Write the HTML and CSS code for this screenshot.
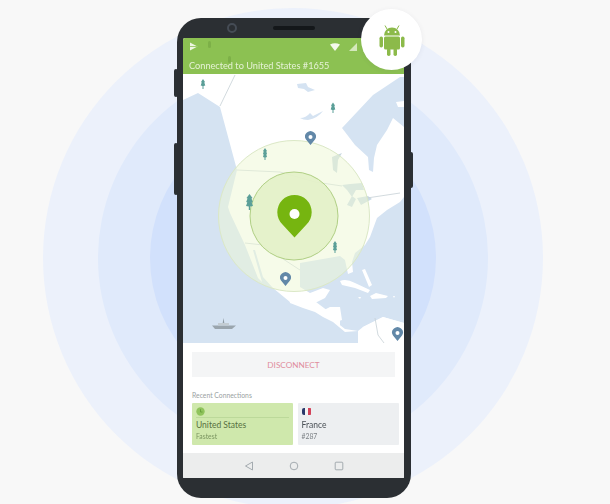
FILE: index.html
```html
<!DOCTYPE html>
<html lang="en">
<head>
<meta charset="utf-8">
<title>Android VPN</title>
<link rel="stylesheet" href="styles.css">
</head>
<body>
<div class="stage">
  <div class="ring ring-1"></div>
  <div class="ring ring-2"></div>
  <div class="ring ring-3"></div>

  <div class="side-btn btn-a"></div>
  <div class="side-btn btn-b"></div>
  <div class="side-btn btn-c"></div>

  <div class="phone">
    <div class="bezel-top">
      <span class="camera"></span>
      <span class="speaker"></span>
    </div>
    <div class="screen">
      <header class="app-bar">
        <span class="bar-tree bar-tree-a"></span>
        <span class="bar-tree bar-tree-b"></span>
        <div class="status">
          <svg class="st-play" width="9" height="9" viewBox="0 0 9 9"><path d="M1 .5 8.500 4.500 1 8.500Z" fill="#eef6e2"/><path d="M1 4.500h7" stroke="#8cc152" stroke-width=".8"/></svg>
          <svg class="st-wifi" width="10" height="8" viewBox="0 0 10 8"><path d="M0 1.500Q5-1 10 1.500L5 8Z" fill="#f4f9ec"/></svg>
          <svg class="st-signal" width="8" height="8" viewBox="0 0 8 8"><path d="M0 8 8 0V8Z" fill="#d4e8bc"/></svg>
        </div>
        <div class="title">Connected to United States #1655</div>
      </header>

      <div class="map">
        <svg class="map-svg" viewBox="183 74 221 269" width="221" height="269">
          <rect x="183" y="74" width="221" height="269" fill="#fff"/>
          <!-- Pacific and the coast of Mexico -->
          <path fill="#d5e3f2" d="M183 100 198 93 220 107 237 170 228 207 230 213 245 245 258 278 262 282 253 250 255 250 263 277 273 288 290 302 303 307 315 311 323 316 333 321 345 330 358 331V343H183Z"/>
          <!-- Gulf, Caribbean, Atlantic -->
          <path fill="#d5e3f2" d="M300 263 340 256 345 260 348 274 353 272 352 262 355 253 365 245 370 237 377 218 387 210 400 202 404 197V323L383 317 363 327 358 331V343H340V320L300 290Z"/>
          <!-- Hudson Bay -->
          <path fill="#d5e3f2" d="M342 128 373 95 400 77H404V127L393 118 387 130 377 145 374 158 373 172 369 170 368 157 355 145Z"/>
          <path fill="#fff" d="M396 102 404 101V107L398 107Z"/>
          <!-- Arctic islands -->
          <path fill="#d5e3f2" d="M297 84 306 83 308 87 315 90 308 92 304 89 298 88ZM300 118Q306 118 310 113L313 116 323 111Q318 118 308 120 303 120 300 118Z"/>
          <!-- Lakes -->
          <path fill="#c9d8e0" d="M332 157 342 153 338 160 337 173 333 170Z"/>
          <path fill="#cbdbe6" d="M342 185 350 184 362 183 364 190 356 190 352 197 347 190ZM347 205 352 196 356 199 352 207ZM357 198 368 196 372 199 361 205Z"/>
          <!-- Central America and islands -->
          <path fill="#fff" d="M288 291 300 287 310 293 323 288 330 290 325 298 315 303 320 312 330 307 340 307 342 320 336 322 345 329 358 331 345 332 333 322 323 317 315 312 303 308 290 303Z"/>
          <path fill="#fff" d="M340 281Q346 278 355 283L370 290 368 293 355 288 342 285ZM362 270 365 269 372 285 369 287ZM370 296 376 293 388 296 386 298 372 299ZM393 296 395 296 394 298ZM358 297 361 297 360 299Z"/>
          <!-- South America -->
          <path fill="#fff" d="M358 343 358 337 363 327 383 317 404 323V343Z"/>
          <path fill="none" stroke="#c6d0d6" stroke-width=".8" d="M235 75 220 106M237 170 280 172 315 182 342 186M245 243 263 245 280 257 300 270M367 198 400 193M375 318 378 335 384 343"/>
          <!-- Range circles -->
          <circle cx="294" cy="216" r="75.500" fill="#eef7d4" fill-opacity=".5" stroke="#dbe8c6" stroke-width="1"/>
          <circle cx="294" cy="216" r="44" fill="#e3f1c8" fill-opacity=".9" stroke="#b0cf84" stroke-width="1"/>
          <path fill="#76b510" d="M294.500 237.500 282.500 224.500A17.200 17.200 0 1 1 306.500 224.500Z"/>
          <circle cx="294.500" cy="214" r="5" fill="#fff"/>
          <!-- Server pins -->
          <g fill="#6288a8">
            <path d="M310.500 145 306 139.500A5.400 5.400 0 1 1 315 139.500Z"/>
            <path d="M285.500 286 281 280.500A5.400 5.400 0 1 1 290 280.500Z"/>
            <path d="M397.500 341 393 335.500A5.400 5.400 0 1 1 402 335.500Z"/>
          </g>
          <g fill="#fff"><circle cx="310.500" cy="137" r="2"/><circle cx="285.500" cy="278" r="2"/><circle cx="397.500" cy="333" r="2"/></g>
          <!-- Trees -->
          <g fill="#5b9f98">
            <path d="M203 79 205 82 204.300 82.500 205.300 85.500 203.500 86V89H202.500V86L200.700 85.500 201.700 82.500 201 82Z"/>
            <path d="M333 102.500 335 105.500 334.300 106 335.300 109.500 333.500 110V113H332.500V110L330.700 109.500 331.700 106 331 105.500Z"/>
            <path d="M265 148 267 151 266.300 151.500 267 154 266.300 154.500 267 157 265.500 157.500V160H264.500V157.500L263 157 263.700 154.500 263 154 263.700 151.500 263 151Z"/>
            <path d="M249.500 194 252.500 198 251.500 198.500 252.800 202 251.700 202.500 253 206 250.200 206.500V210H248.800V206.500L246 206 247.300 202.500 246.200 202 247.500 198.500 246.500 198Z"/>
            <path d="M335 241 337 244 336.300 244.500 337 247 336.300 247.500 337 250 335.500 250.500V253H334.500V250.500L333 250 333.700 247.500 333 247 333.700 244.500 333 244Z"/>
          </g>
          <!-- Ship -->
          <path fill="#9aa5ad" d="M212 325.500H236L232 329H215Z"/>
          <path fill="#c3ccd2" d="M218 323H229V325.500H218Z"/>
          <path fill="#8e9aa2" d="M223.500 318 224.300 323H222.700Z"/>
        </svg>
      </div>

      <div class="panel">
        <div class="disconnect">DISCONNECT</div>
        <div class="recent-label">Recent Connections</div>
        <div class="cards">
          <div class="card card-us">
            <div class="card-head">
              <svg width="9" height="9" viewBox="0 0 9 9"><circle cx="4.500" cy="4.500" r="4.200" fill="#8fc45c"/><path d="M4.500 2.200V5H6.500" fill="none" stroke="#5f9a35" stroke-width=".8"/></svg>
            </div>
            <div class="card-name">United States</div>
            <div class="card-sub">Fastest</div>
          </div>
          <div class="card card-fr">
            <div class="card-head card-head-plain">
              <span class="flag"><i class="fl-b"></i><i class="fl-w"></i><i class="fl-r"></i></span>
            </div>
            <div class="card-name">France</div>
            <div class="card-sub">#287</div>
          </div>
        </div>
      </div>

      <nav class="nav-bar">
        <svg width="10" height="10" viewBox="0 0 10 10"><path d="M8.500 1V9L1.500 5Z" fill="none" stroke="#a4abb0" stroke-width="1"/></svg>
        <svg width="10" height="10" viewBox="0 0 10 10"><circle cx="5" cy="5" r="3.800" fill="none" stroke="#a4abb0" stroke-width="1"/></svg>
        <svg width="10" height="10" viewBox="0 0 10 10"><rect x="1.200" y="1.200" width="7.600" height="7.600" rx=".8" fill="none" stroke="#a4abb0" stroke-width="1"/></svg>
      </nav>
    </div>
  </div>

  <div class="badge">
    <svg width="26" height="32" viewBox="0 0 26 32">
      <g fill="#8cba4a">
        <path d="M5 11.500A8 8 0 0 1 21 11.500Z"/>
        <rect x="5" y="12.500" width="16" height="13" rx="1.500"/>
        <rect x="0.500" y="12.500" width="3.500" height="11" rx="1.700"/>
        <rect x="22" y="12.500" width="3.500" height="11" rx="1.700"/>
        <rect x="8" y="24" width="3.500" height="8" rx="1.700"/>
        <rect x="14.500" y="24" width="3.500" height="8" rx="1.700"/>
        <path d="M8 5 6 1.500M18 5 20 1.500" stroke="#8cba4a" stroke-width="1"/>
      </g>
      <circle cx="9.500" cy="8" r="1" fill="#fff"/>
      <circle cx="16.500" cy="8" r="1" fill="#fff"/>
    </svg>
  </div>
</div>
</body>
</html>
```
FILE: styles.css
```css
html, body {
  margin: 0;
  padding: 0;
  background: #f8f8f8;
}
.stage {
  position: relative;
  width: 610px;
  height: 504px;
  overflow: hidden;
  font-family: Lato, "Liberation Sans", sans-serif;
}
.ring {
  position: absolute;
  border-radius: 50%;
}
.ring-1 { left: 43px; top: 8px; width: 500px; height: 500px; background: #ecf1fb; }
.ring-2 { left: 98px; top: 63px; width: 390px; height: 390px; background: #e0eafb; }
.ring-3 { left: 150px; top: 115px; width: 286px; height: 286px; background: #d2e1fc; }

.side-btn {
  position: absolute;
  background: #2b3034;
  border-radius: 2px;
}
.btn-a { left: 174px; top: 69px; width: 4px; height: 28px; }
.btn-b { left: 174px; top: 143px; width: 4px; height: 52px; }
.btn-c { left: 409px; top: 152px; width: 4px; height: 36px; }

.phone {
  position: absolute;
  left: 177px;
  top: 18px;
  width: 234px;
  height: 480px;
  box-sizing: border-box;
  padding: 0 7px 20px 6px;
  background: #2b2f33;
  border-radius: 24px;
  display: flex;
  flex-direction: column;
  filter: blur(.4px);
}
.bezel-top {
  height: 20px;
  flex: none;
  position: relative;
}
.camera {
  position: absolute;
  left: 44px;
  top: 5px;
  width: 6px;
  height: 6px;
  border: 2px solid #454c55;
  border-radius: 50%;
}
.speaker {
  position: absolute;
  left: 90px;
  top: 8px;
  width: 42px;
  height: 4px;
  border-radius: 2px;
  background: #14171a;
}
.screen {
  flex: 1;
  display: flex;
  flex-direction: column;
  background: #fff;
  border-radius: 2px 2px 1px 1px;
  overflow: hidden;
}
.app-bar {
  height: 36px;
  flex: none;
  background: #8cc152;
  display: flex;
  flex-direction: column;
  position: relative;
}
.bar-tree {
  position: absolute;
  width: 3px;
  height: 7px;
  border-radius: 2px;
  background: #7db048;
}
.bar-tree-a { left: 25px; top: 3px; }
.bar-tree-b { left: 45px; top: 18px; }
.status {
  height: 17px;
  display: flex;
  align-items: center;
  padding: 0 0 0 6px;
}
.st-wifi { margin-left: 132px; }
.st-signal { margin-left: 9px; }
.title {
  margin-top: 4px;
  padding-left: 6px;
  font-size: 9.200px;
  line-height: 14px;
  color: #e6f2d6;
  white-space: nowrap;
}
.map {
  height: 269px;
  flex: none;
}
.map-svg {
  display: block;
}
.panel {
  flex: 1;
  display: flex;
  flex-direction: column;
  background: #fff;
  padding: 9px 5px 0 9px;
}
.disconnect {
  height: 25px;
  margin-right: 4px;
  background: #f4f5f6;
  color: #e08d9d;
  font-size: 8.200px;
  line-height: 27px;
  text-align: center;
}
.recent-label {
  margin-top: 14px;
  font-size: 6.800px;
  line-height: 9px;
  color: #9a9fa2;
}
.cards {
  margin-top: 3px;
  display: flex;
  gap: 5px;
}
.card {
  height: 42px;
  box-sizing: border-box;
  padding: 2px 4px 0;
  border-radius: 1px;
}
.card-us { width: 101px; background: #cfe8ac; color: #56703f; }
.card-fr { width: 102px; background: #edeff1; color: #4a5056; }
.card-head {
  height: 12px;
  display: flex;
  align-items: center;
  border-bottom: 1px solid #bcd99a;
}
.card-head-plain { border-bottom-color: transparent; }
.flag {
  display: flex;
  width: 10px;
  height: 7px;
  border-radius: 2px;
  overflow: hidden;
}
.flag i { flex: 1; }
.fl-b { background: #2b3a6b; }
.fl-w { background: #f4f4f4; }
.fl-r { background: #d2435a; }
.card-name {
  font-size: 8.500px;
  line-height: 14px;
}
.card-sub {
  font-size: 6.800px;
  line-height: 9px;
  opacity: .7;
}
.nav-bar {
  height: 25px;
  flex: none;
  background: #eceded;
  display: flex;
  justify-content: center;
  align-items: center;
  gap: 35px;
}
.badge {
  position: absolute;
  left: 361px;
  top: 9px;
  width: 61px;
  height: 61px;
  border-radius: 50%;
  background: #fff;
  box-shadow: 0 1px 5px rgba(60, 70, 90, .08);
  display: flex;
  align-items: center;
  justify-content: center;
}
```
